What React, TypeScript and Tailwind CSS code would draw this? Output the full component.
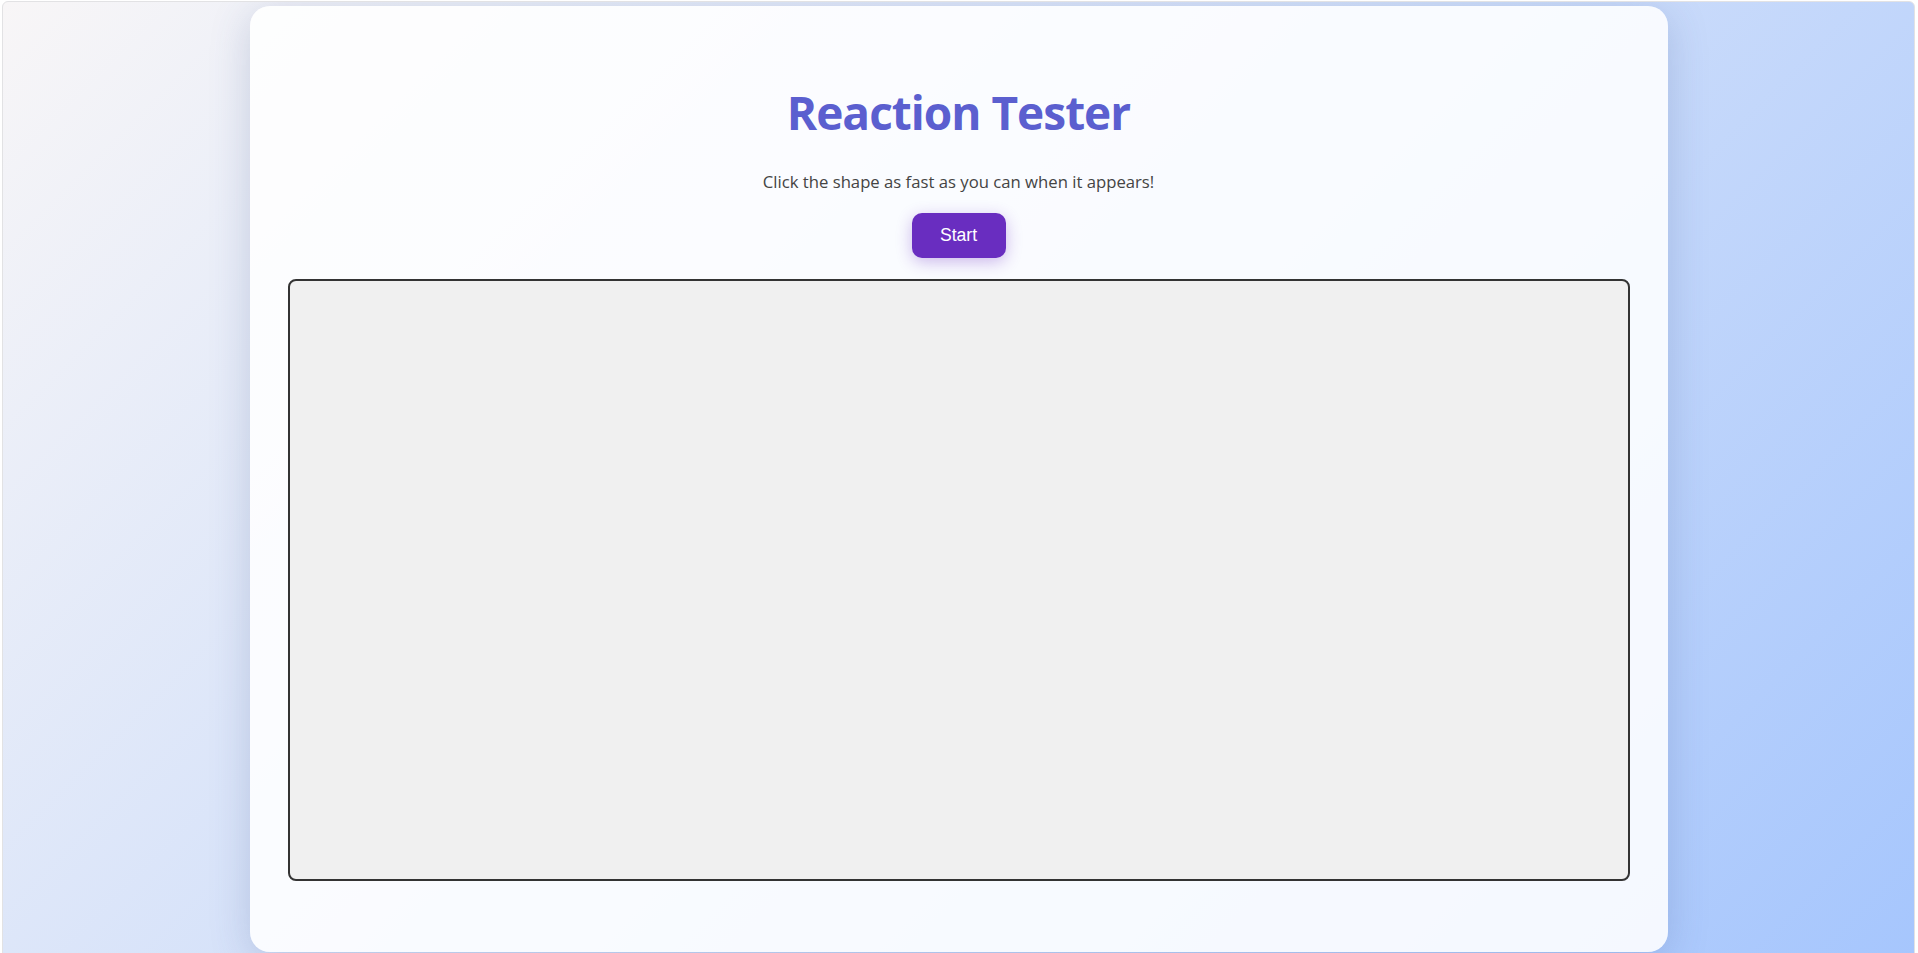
import React from "react";

export default function App() {
  return (
    <div className="h-[953px] w-full overflow-hidden bg-white pl-[2px] pr-[3px] pt-[1px]">
      <div className="flex h-[960px] justify-center overflow-hidden rounded-[6px] border border-[#e2e2e4] pt-[4px] bg-[linear-gradient(135deg,#f8f6f7_0%,#a6c6fd_100%)]">
        <div className="flex h-[946px] w-[1418px] shrink-0 flex-col items-center rounded-[20px] bg-white/[0.87] px-[38px] shadow-[0_8px_40px_rgba(60,80,140,0.22)]">
          <h1 className="mt-[79px] text-[46px] font-bold leading-[1.2] tracking-[-1px] text-[#5b5fcf] [font-family:'Open_Sans','Noto_Sans',sans-serif]">
            Reaction Tester
          </h1>
          <p className="mt-[30px] text-[16.7px] leading-[24px] text-[#444444] [font-family:'Open_Sans','Noto_Sans',sans-serif]">
            Click the shape as fast as you can when it appears!
          </p>
          <button className="mt-[19px] h-[45px] w-[94px] rounded-[10px] bg-[#692dc0] text-[17.6px] text-white shadow-[0_4px_16px_rgba(105,45,192,0.32)] [font-family:'Liberation_Sans',Arial,sans-serif]">
            Start
          </button>
          <div className="mt-[21px] h-[602px] w-full shrink-0 rounded-[8px] border-2 border-[#333333] bg-[#f0f0f0]" />
        </div>
      </div>
    </div>
  );
}
